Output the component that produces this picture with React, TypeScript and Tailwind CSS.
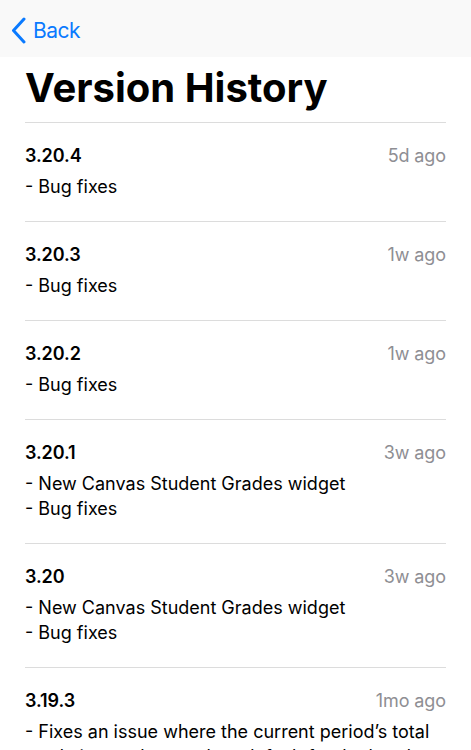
const versions = [
  { version: "3.20.4", when: "5d ago", notes: ["- Bug fixes"] },
  { version: "3.20.3", when: "1w ago", notes: ["- Bug fixes"] },
  { version: "3.20.2", when: "1w ago", notes: ["- Bug fixes"] },
  { version: "3.20.1", when: "3w ago", notes: ["- New Canvas Student Grades widget", "- Bug fixes"] },
  { version: "3.20", when: "3w ago", notes: ["- New Canvas Student Grades widget", "- Bug fixes"] },
  {
    version: "3.19.3",
    when: "1mo ago",
    notes: ["- Fixes an issue where the current period\u2019s total grade is not shown when default for the header is blank"],
  },
];

export default function App() {
  return (
    <div className="w-[471px] h-[750px] overflow-hidden bg-white text-black font-['Inter','Liberation_Sans',sans-serif]">
      {/* nav bar */}
      <div className="h-[57px] bg-[#f9f9f9] flex items-center pl-[11px] pt-[4px]">
        <svg width="15" height="27" viewBox="0 0 15 27" fill="none">
          <path d="M13 2 L2.5 13.5 L13 25" stroke="#0a7aff" strokeWidth="3" strokeLinecap="round" strokeLinejoin="round" />
        </svg>
        <span className="ml-[7px] text-[21px] text-[#0a7aff] tracking-[-0.5px]">Back</span>
      </div>

      <div className="px-[25px]">
        <h1 className="pt-[7px] pb-[10px] text-[40px] leading-[48px] font-bold tracking-normal">Version History</h1>

        {versions.map((v) => (
          <div key={v.version} className="border-t border-[#dcdcdc] pt-[20px] pb-[22px]">
            <div className="flex items-center justify-between h-[25px]">
              <span className="text-[18px] font-semibold tracking-[-0.1px]">{v.version}</span>
              <span className="text-[18px] text-[#8e8e93] tracking-[-0.1px]">{v.when}</span>
            </div>
            <div className="mt-[6px]">
              {v.notes.map((n) => (
                <p key={n} className="text-[18px] leading-[25px] tracking-normal">{n}</p>
              ))}
            </div>
          </div>
        ))}
      </div>
    </div>
  );
}
